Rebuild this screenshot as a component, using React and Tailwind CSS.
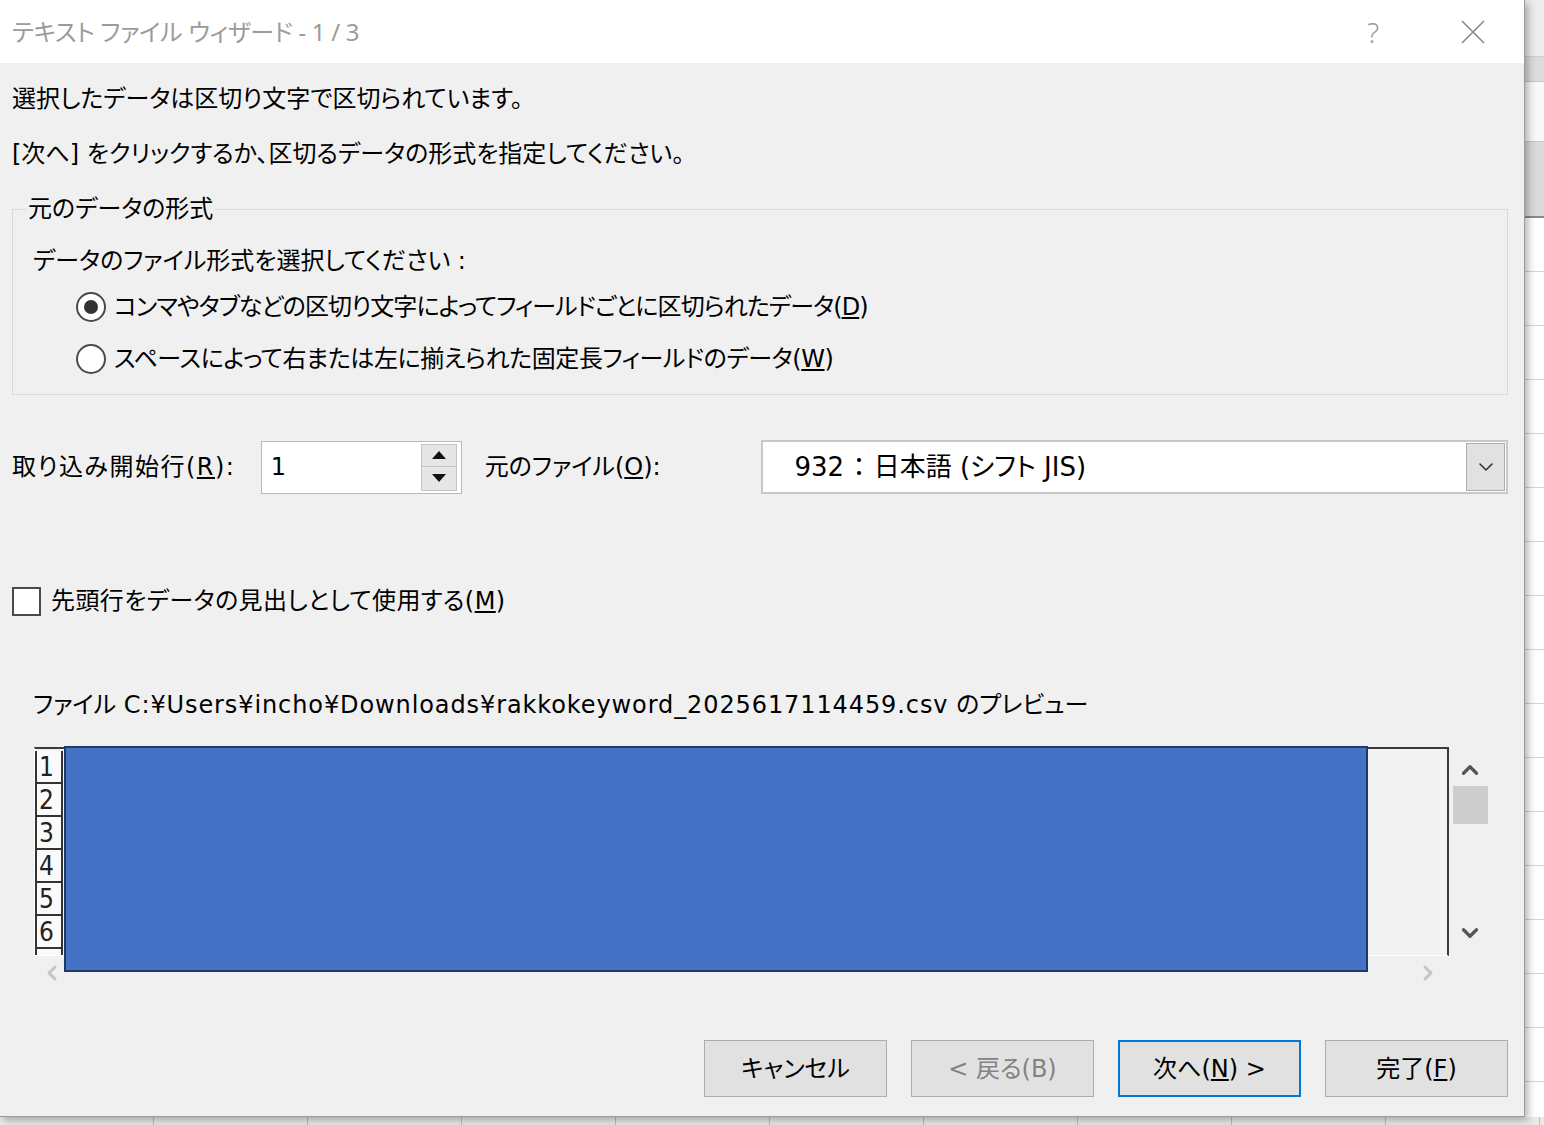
import { ChevronDown, ChevronUp, ChevronLeft, ChevronRight } from 'lucide-react'

const ROWS = [1, 2, 3, 4, 5, 6, '']
const SHEET_LINES = Array.from({ length: 16 }, (_, i) => i)
const COLS = Array.from({ length: 10 }, (_, i) => i)

function Radio({ checked, children }) {
  return (
    <div className="flex items-center h-[40px]">
      <span className="ml-[63px] w-[30px] h-[30px] rounded-full border-2 border-[#4a4a4a] bg-white flex items-center justify-center">
        {checked && <span className="w-[14px] h-[14px] rounded-full bg-[#333]" />}
      </span>
      {children}
    </div>
  )
}

function Btn({ children, primary, disabled }) {
  return (
    <button
      className={
        'w-[183px] h-[57px] bg-[#e1e1e1] flex items-center justify-center text-[24px] ' +
        (primary ? 'border-2 border-[#0078d7] ' : 'border border-[#adadad] ') +
        (disabled ? 'text-[#838383]' : 'text-black')
      }
    >
      {children}
    </button>
  )
}

function Dialog() {
  return (
    <div className="w-[1525px] h-[1117px] bg-[#f0f0f0] flex flex-col relative z-10 border-r border-b border-[#9a9a9a] shadow-[3px_3px_8px_rgba(0,0,0,0.3)]">
      {/* title bar */}
      <div className="h-[63px] bg-white flex items-center pl-[12px] pr-[39px] shrink-0 font-['Noto_Sans','Noto_Sans_CJK_JP',sans-serif]">
        <span className="text-[24px] text-[#9b9b9b] tracking-[-0.3px]">テキスト ファイル ウィザード - 1 / 3</span>
        <span className="ml-auto text-[28px] text-[#9b9b9b] font-light">?</span>
        <svg className="ml-[82px]" width="24" height="24" viewBox="0 0 24 24">
          <path d="M1 1 L23 23 M23 1 L1 23" stroke="#8a8a8a" strokeWidth="1.6" fill="none" />
        </svg>
      </div>

      <div className="flex flex-col pl-[12px] pr-[16px] flex-1">
        <p className="mt-[18px] h-[36px] leading-[36px] text-[24px]">選択したデータは区切り文字で区切られています。</p>
        <p className="mt-[19px] h-[36px] leading-[36px] text-[24px]">[次へ] をクリックするか、区切るデータの形式を指定してください。</p>

        <fieldset className="mt-[19px] border border-[#d9d9d9] pb-[15px] text-[24px]">
          <legend className="ml-[13px] px-[2px] leading-[36px]">元のデータの形式</legend>
          <p className="mt-[16px] ml-[20px] h-[36px] leading-[36px]">データのファイル形式を選択してください :</p>
          <div className="mt-[8px]">
            <Radio checked>
              <span className="ml-[8px] tracking-[-0.9px]">コンマやタブなどの区切り文字によってフィールドごとに区切られたデータ(<u>D</u>)</span>
            </Radio>
          </div>
          <div className="mt-[12px]">
            <Radio>
              <span className="ml-[8px] tracking-[-0.4px]">スペースによって右または左に揃えられた固定長フィールドのデータ(<u>W</u>)</span>
            </Radio>
          </div>
        </fieldset>

        {/* start row / origin */}
        <div className="mt-[45px] flex items-center text-[24px]">
          <span className="w-[249px] tracking-[1.5px]">取り込み開始行(<u>R</u>):</span>
          <div className="w-[201px] h-[53px] bg-white border border-[#b9b9b9] flex items-center pl-[9px] pr-[4px]">
            <span className="flex-1">1</span>
            <div className="w-[36px] h-[47px] flex flex-col">
              <div className="h-[23px] bg-[#e6e6e6] border border-[#c4c4c4] flex items-center justify-center">
                <svg width="14" height="8" viewBox="0 0 14 8"><path d="M7 0 L14 8 L0 8 Z" fill="#111" /></svg>
              </div>
              <div className="h-[24px] bg-[#e6e6e6] border border-t-0 border-[#c4c4c4] flex items-center justify-center">
                <svg width="14" height="8" viewBox="0 0 14 8"><path d="M0 0 L14 0 L7 8 Z" fill="#111" /></svg>
              </div>
            </div>
          </div>
          <span className="ml-[23px] w-[276px]">元のファイル(<u>O</u>):</span>
          <div className="w-[748px] h-[54px] bg-white border-2 border-[#c8c8c8] flex items-center pl-[32px] pr-[1px]">
            <span className="flex-1 text-[26px]">932 ： 日本語 (シフト JIS)</span>
            <div className="w-[39px] h-[48px] bg-[#e1e1e1] border border-[#adadad] flex items-center justify-center">
              <ChevronDown size={24} strokeWidth={1.6} color="#333" />
            </div>
          </div>
        </div>

        {/* header checkbox */}
        <div className="mt-[89px] h-[36px] flex items-center text-[24px]">
          <span className="w-[29px] h-[29px] bg-white border-2 border-[#4a4a4a]" />
          <span className="ml-[10px] tracking-[0.4px]">先頭行をデータの見出しとして使用する(<u>M</u>)</span>
        </div>

        <p className="mt-[68px] ml-[21px] h-[36px] leading-[36px] text-[24px]">
          ファイル <span className="tracking-[0.9px]">C:¥Users¥incho¥Downloads¥rakkokeyword_2025617114459.csv</span> のプレビュー
        </p>

        {/* preview */}
        <div className="mt-[24px] ml-[22px] flex">
          <div className="w-[1415px] h-[209px] bg-[#f2f2f2] border-t-2 border-r-2 border-[#3a3a3a] border-l border-b border-l-white border-b-white relative">
            <div className="w-[28px] h-full overflow-hidden flex flex-col pt-[2px]">
              {ROWS.map((n, i) => (
                <div key={i} className="h-[33px] shrink-0 bg-[#fafafa] border-x-2 border-b-2 border-[#333] pl-[2px] leading-[32px] text-[26px] font-light font-['DejaVu_Sans_Condensed','Liberation_Sans',sans-serif] text-[#222]">
                  {n}
                </div>
              ))}
            </div>
            <div className="absolute left-[29px] top-[-3px] w-[1304px] h-[226px] bg-[#4472c4] border-2 border-[#1f3864]" />
          </div>
          <div className="w-[40px] flex flex-col items-center pl-[2px]">
            <ChevronUp size={26} strokeWidth={3} color="#555" className="mt-[10px]" />
            <div className="w-[35px] h-[38px] bg-[#cdcdcd] mt-[3px]" />
            <ChevronDown size={26} strokeWidth={3} color="#555" className="mt-[96px]" />
          </div>
        </div>
        <div className="ml-[28px] w-[1400px] h-[34px] flex items-center justify-between">
          <ChevronLeft size={24} strokeWidth={3} color="#c4c4c4" />
          <ChevronRight size={24} strokeWidth={3} color="#c4c4c4" />
        </div>

        {/* buttons */}
        <div className="mt-auto mb-[19px] flex justify-end gap-[24px]">
          <Btn>キャンセル</Btn>
          <Btn disabled>&lt; 戻る(B)</Btn>
          <Btn primary>次へ(<u>N</u>) &gt;</Btn>
          <Btn>完了(<u>F</u>)</Btn>
        </div>
      </div>
    </div>
  )
}

function SheetStrip() {
  return (
    <div className="flex-1 flex flex-col bg-white">
      <div className="h-[57px] bg-[#ececec] border-b border-[#cfcfcf] shrink-0" />
      <div className="h-[25px] bg-[#dcdcdc] border-b border-[#c4c4c4] shrink-0" />
      <div className="h-[60px] bg-[#f8f8f8] border-b border-[#c8c8c8] shrink-0" />
      <div className="h-[76px] bg-[#dadada] border-b-2 border-[#8a8a8a] shrink-0" />
      {SHEET_LINES.map(i => (
        <div key={i} className="h-[54px] bg-white border-b border-[#d4d4d4] shrink-0" />
      ))}
    </div>
  )
}

export default function App() {
  return (
    <div className="w-[1544px] h-[1125px] overflow-hidden flex flex-col bg-white text-black font-['DejaVu_Sans','Noto_Sans_CJK_JP',sans-serif] [font-feature-settings:'palt']">
      <div className="flex h-[1117px] shrink-0">
        <Dialog />
        <SheetStrip />
      </div>
      <div className="flex-1 bg-[#e9e9e9] flex">
        {COLS.map(i => (
          <div key={i} className="w-[154px] shrink-0 border-r border-[#bdbdbd]" />
        ))}
      </div>
    </div>
  )
}
